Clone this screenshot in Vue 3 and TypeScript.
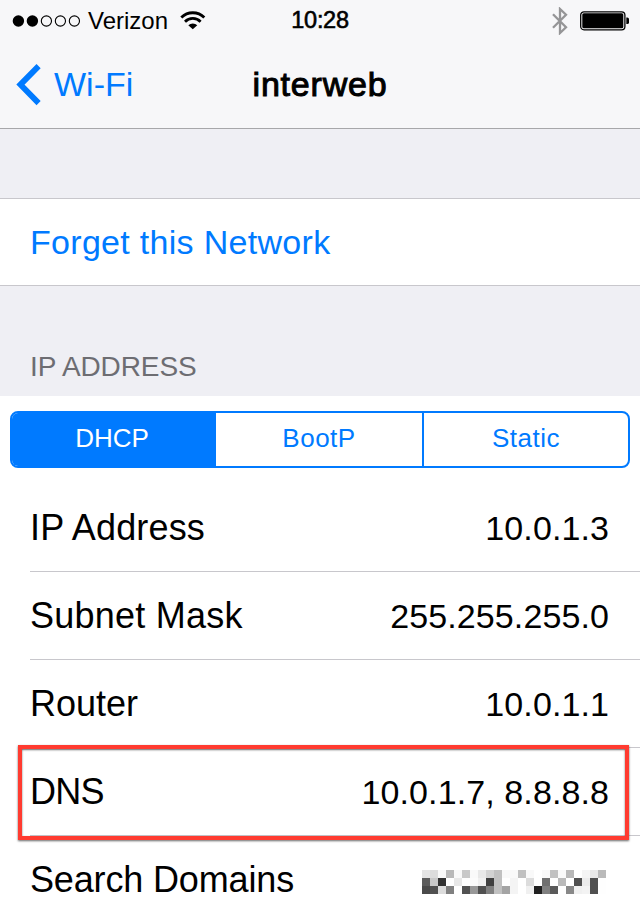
<script setup lang="ts">
import { ref } from 'vue'

interface Row {
  id: string
  label: string
  value?: string
}

const modes = ['DHCP', 'BootP', 'Static']
const selected = ref('DHCP')

const rows: Row[] = [
  { id: 'ip', label: 'IP Address', value: '10.0.1.3' },
  { id: 'mask', label: 'Subnet Mask', value: '255.255.255.0' },
  { id: 'router', label: 'Router', value: '10.0.1.1' },
  { id: 'dns', label: 'DNS', value: '10.0.1.7, 8.8.8.8' },
  { id: 'search', label: 'Search Domains' },
]

// Grey levels of the pixelated search domain, one hex pair per block
const mosaic: string[][] = [
  'e4 dc f9 b9 f9 c9 f9 e8 d2 c1 f9 f9 c0 f9 ff f9 c1 f9 b8 ff f4 e8 ba',
  '5c c8 32 ff e8 ff fb f0 40 c1 ff f4 ff dc ff 70 ff ba ff 50 eb 50 fe',
  '4a 50 dc 80 ff 52 98 50 80 c1 a4 f4 ff f0 20 80 5a ff 88 f0 f3 50 fe',
].map((line) => line.split(' '))
</script>

<template>
  <div class="screen">
    <header class="top">
      <div class="status">
        <div class="carrier">
          <svg class="signal" width="70" height="14" viewBox="0 0 70 14">
            <circle cx="6.4" cy="7" r="5.7" />
            <circle cx="20.4" cy="7" r="5.7" />
            <circle class="empty" cx="34.4" cy="7" r="5.1" />
            <circle class="empty" cx="48.4" cy="7" r="5.1" />
            <circle class="empty" cx="62.4" cy="7" r="5.1" />
          </svg>
          <span class="name">Verizon</span>
          <svg class="wifi" width="26" height="19" viewBox="0 0 26 19">
            <path d="M1.3 6.5a16.3 16.3 0 0 1 23 0" />
            <path d="M5 10.7a11 11 0 0 1 15.6 0" />
            <path class="dot" d="M8.3 14.2a6.5 6.5 0 0 1 9 0L12.8 18.3z" />
          </svg>
        </div>
        <span class="time">10:28</span>
        <div class="power">
          <svg class="bluetooth" width="16" height="28" viewBox="0 0 16 28">
            <path d="M1 7.3L14 20.3L8 26V2L14 7.7L1 20.7" />
          </svg>
          <svg class="battery" width="50" height="20" viewBox="0 0 50 20">
            <rect class="shell" x="0.7" y="0.8" width="44.2" height="18" rx="3.3" />
            <rect x="2.3" y="2.3" width="41" height="15" rx="1.5" />
            <path d="M46.3 6.5h1q1.700 0 1.700 1.700v3.200q0 1.700-1.700 1.700h-1z" />
          </svg>
        </div>
      </div>
      <nav class="nav">
        <a class="back">
          <svg width="26" height="42" viewBox="0 0 26 42">
            <path d="M23.600 2.100L5.400 20.600L23.600 39.100" />
          </svg>
          <span>Wi-Fi</span>
        </a>
        <h1>interweb</h1>
      </nav>
    </header>

    <button class="forget">Forget this Network</button>

    <h2>IP ADDRESS</h2>

    <section class="panel">
      <div class="segments">
        <button
          v-for="mode in modes"
          :key="mode"
          :class="['segment', mode.toLowerCase(), { active: mode === selected }]"
          @click="selected = mode"
        >{{ mode }}</button>
      </div>
      <div v-for="row in rows" :key="row.id" :class="['row', row.id]">
        <span class="label">{{ row.label }}</span>
        <span v-if="row.value" class="value">{{ row.value }}</span>
        <svg v-else class="mosaic" width="184" height="24" viewBox="0 0 184 24" shape-rendering="crispEdges">
          <template v-for="(line, y) in mosaic" :key="y">
            <rect
              v-for="(tone, x) in line"
              :key="x"
              :x="x * 8"
              :y="y * 8"
              width="8"
              height="8"
              :fill="`#${tone}${tone}${tone}`"
            />
          </template>
        </svg>
        <div v-if="row.id === 'dns'" class="highlight"></div>
      </div>
    </section>
  </div>
</template>

<style>
body {
  margin: 0;
  overflow: hidden;
}
</style>

<style scoped>
.screen {
  width: 640px;
  height: 922px;
  overflow: hidden;
  background: #efeff4;
  color: #000;
  font-family: "Liberation Sans", Arial, sans-serif;
}
button {
  margin: 0;
  padding: 0;
  border: 0;
  background: none;
  font-family: inherit;
}
.top {
  box-sizing: border-box;
  height: 129px;
  background: #f7f7f9;
  border-bottom: 1px solid #a7a7aa;
}
.status {
  display: grid;
  grid-template-columns: 1fr auto 1fr;
  height: 41px;
  line-height: 41px;
}
.carrier {
  display: flex;
  align-items: center;
  padding-left: 12px;
}
.name {
  width: 92px;
  padding-left: 6px;
  font-size: 24px;
}
.empty {
  fill: none;
  stroke: #000;
  stroke-width: 1.1;
}
.wifi path {
  fill: none;
  stroke: #000;
  stroke-width: 2.8;
}
.wifi .dot {
  fill: #000;
  stroke: none;
}
.time {
  font-size: 23.5px;
  letter-spacing: -0.3px;
  -webkit-text-stroke: 0.6px #000;
}
.power {
  display: flex;
  align-items: center;
  justify-content: flex-end;
  gap: 12px;
  padding-right: 10px;
}
.bluetooth {
  fill: none;
  stroke: #959597;
  stroke-width: 2.3;
}
.shell {
  fill: none;
  stroke: #000;
  stroke-width: 1.3;
}
.nav {
  display: grid;
  grid-template-columns: 1fr auto 1fr;
  height: 87px;
  line-height: 87px;
  font-size: 34px;
}
.back {
  display: flex;
  align-items: center;
  padding-left: 15px;
  gap: 13px;
  color: #007aff;
}
.back path {
  fill: none;
  stroke: #007aff;
  stroke-width: 5.8;
}
h1 {
  margin: 0;
  font-size: 34px;
  font-weight: 400;
  letter-spacing: 0.8px;
  -webkit-text-stroke: 1px #000;
}
.forget {
  display: block;
  box-sizing: border-box;
  width: 640px;
  height: 88px;
  margin-top: 69px;
  padding-left: 30px;
  border-top: 1px solid #c8c7cc;
  border-bottom: 1px solid #c8c7cc;
  background: #fff;
  color: #007aff;
  font-size: 34px;
  line-height: 86px;
  letter-spacing: 0.3px;
  text-align: left;
}
h2 {
  height: 110px;
  margin: 0;
  padding-left: 30px;
  box-sizing: border-box;
  padding-top: 61px;
  color: #6d6d72;
  font-size: 28px;
  font-weight: 400;
  line-height: 40px;
  letter-spacing: -0.1px;
}
.panel {
  height: 526px;
  padding-top: 15px;
  background: #fff;
}
.segments {
  display: grid;
  grid-template-columns: 204px 208px 1fr;
  grid-template-columns: 204px 206px 1fr;
  box-sizing: border-box;
  height: 57px;
  margin: 0 10px 16px;
  border: 2px solid #007aff;
  border-radius: 8px;
  overflow: hidden;
}
.segment {
  color: #007aff;
  font-size: 26px;
  line-height: 50px;
  padding-bottom: 3px;
}
.segment + .segment + .segment {
  border-left: 2px solid #007aff;
}
.dhcp {
  padding-right: 4px;
}
.bootp,
.static {
  letter-spacing: 0.5px;
}
.segment.active {
  background: #007aff;
  color: #fff;
}
.row {
  position: relative;
  display: flex;
  align-items: baseline;
  justify-content: space-between;
  box-sizing: border-box;
  height: 88px;
  margin-left: 30px;
  padding-right: 31px;
  border-bottom: 1px solid #c8c7cc;
  line-height: 87px;
}
.label {
  font-size: 36px;
}
.ip .label {
  letter-spacing: 0.15px;
}
.mask .label {
  letter-spacing: 0.25px;
}
.dns .label {
  letter-spacing: -0.8px;
}
.search .label {
  letter-spacing: -0.15px;
}
.value {
  font-size: 34px;
  letter-spacing: 0.1px;
}
.search {
  align-items: flex-start;
  border-bottom: 0;
}
.mosaic {
  margin: 34px 3px 0 0;
}
.highlight {
  position: absolute;
  left: -12px;
  top: -3px;
  box-sizing: border-box;
  width: 611px;
  height: 95px;
  border: 4px solid #ff3b30;
  box-shadow: 0 1px 2px rgba(0, 0, 0, 0.6), inset 0 1px 2px rgba(0, 0, 0, 0.6);
}
</style>
